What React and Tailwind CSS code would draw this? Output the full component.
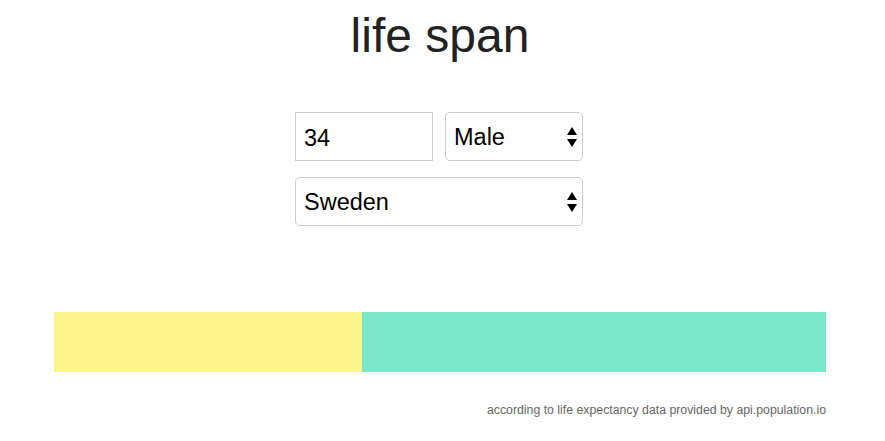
import React, { useState } from 'react';

const Arrows = () => (
  <svg width="10" height="22" viewBox="0 0 10 22" className="pointer-events-none absolute right-[6px] top-1/2 -translate-y-1/2">
    <path d="M5 1 L10 9 L0 9 Z" fill="#000" />
    <path d="M0 13 L10 13 L5 21 Z" fill="#000" />
  </svg>
);

const App = () => {
  const [age, setAge] = useState('34');
  const [sex, setSex] = useState('Male');
  const [country, setCountry] = useState('Sweden');
  const lived = 308;

  return (
    <div className="w-[880px] bg-white text-[#222]" style={{ fontFamily: '"Liberation Sans", Arial, sans-serif' }}>
      <h1 className="pt-[6px] text-center text-[48px] leading-[60px] font-normal text-[#222]">life span</h1>

      <div className="mt-[46px] flex flex-col items-center gap-4 pr-[2px]">
        <div className="flex gap-3">
          <input
            type="text"
            value={age}
            onChange={(e) => setAge(e.target.value)}
            className="h-[49px] w-[138px] border border-[#ccc] px-2 pt-[3px] text-[23.5px] text-black outline-none"
          />
          <div className="relative">
            <select
              value={sex}
              onChange={(e) => setSex(e.target.value)}
              className="h-[49px] w-[138px] appearance-none rounded-[5px] border border-[#ccc] bg-white px-2 pt-[3px] text-[23.5px] text-black outline-none"
            >
              <option>Male</option>
              <option>Female</option>
            </select>
            <Arrows />
          </div>
        </div>
        <div className="relative">
          <select
            value={country}
            onChange={(e) => setCountry(e.target.value)}
            className="h-[49px] w-[288px] appearance-none rounded-[5px] border border-[#ccc] bg-white px-2 pt-[3px] text-[23.5px] text-black outline-none"
          >
            <option>Sweden</option>
            <option>Norway</option>
            <option>Denmark</option>
          </select>
          <Arrows />
        </div>
      </div>

      <div className="mx-[54px] mt-[86px] flex h-[60px]">
        <div className="h-full bg-[#fef48b]" style={{ width: lived }} />
        <div className="h-full flex-1 bg-[#7be6c9]" />
      </div>

      <p className="mx-[54px] mt-[29px] text-right text-[12.3px] text-[#666]">
        according to life expectancy data provided by api.population.io
      </p>
    </div>
  );
};

export default App;
